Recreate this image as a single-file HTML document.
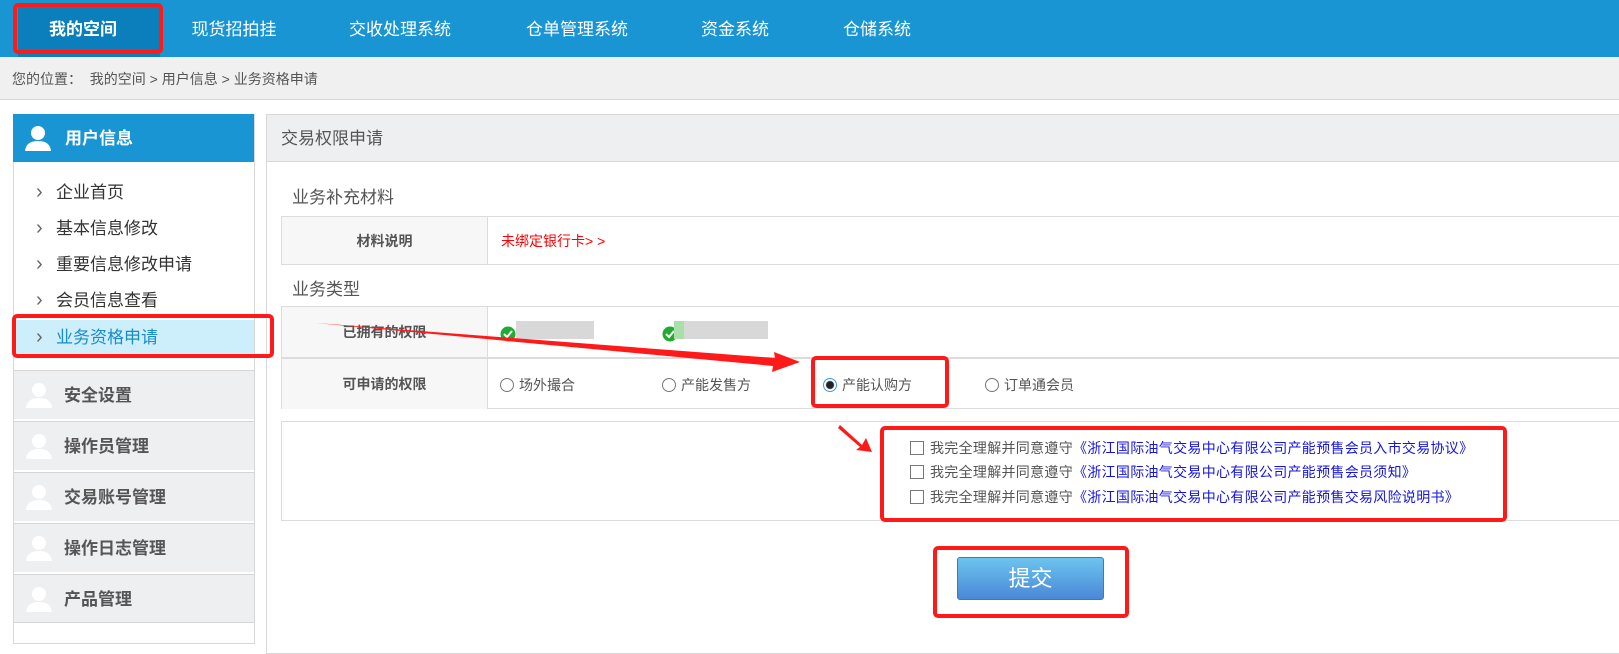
<!DOCTYPE html>
<html><head><meta charset="utf-8">
<style>
*{margin:0;padding:0;box-sizing:border-box}
body{width:1619px;height:644px;overflow:hidden;background:#fff;font-family:"Liberation Sans","Noto Sans CJK SC",sans-serif;position:relative;color:#333}
.a{position:absolute}
.nav{left:0;top:0;width:1619px;height:57px;background:#1a95d3}
.nav span{position:absolute;top:0;line-height:60px;color:#fff;font-size:17px;transform:translateX(-50%)}
.crumb{left:0;top:57px;width:1619px;height:43px;background:#f0f0f0;border-bottom:1px solid #d6d6d6;font-size:14px;color:#555;line-height:44px;padding-left:12px}
.side{left:13px;top:114px;width:242px;height:530px;border:1px solid #d8d8d8;border-top:none;background:#fff}
.sh{left:13px;top:114px;width:241px;height:48px;background:#1a95d3;color:#fff;font-weight:bold;font-size:17px;line-height:50px;padding-left:52px}
.li{left:14px;width:240px;height:36px;font-size:17px;line-height:36px;padding-left:42px;color:#333}
.li:before{content:"›";position:absolute;left:22px;top:-1px;color:#666;font-size:20px}
.sec{left:14px;width:240px;height:49px;background:#eeeff1;border-top:1px solid #d6d6d6;font-size:17px;font-weight:bold;color:#555;line-height:50px;padding-left:50px}
.user{position:absolute;left:10px;top:11px}
.main{left:266px;top:114px;width:1360px;height:540px;border:1px solid #d8d8d8}
.mh{left:267px;top:115px;width:1352px;height:47px;background:#eeeff1;border-bottom:1px solid #d8d8d8;font-size:17px;color:#555;line-height:48px;padding-left:14px}
.tt{font-size:17px;color:#555}
.row{left:281px;width:1340px;border:1px solid #dcdcdc;background:#fff}
.lab{position:absolute;left:0;top:0;width:206px;height:100%;background:#f7f7f7;border-right:1px solid #dcdcdc;text-align:center;font-weight:bold;font-size:14px;color:#555}
.rad{position:absolute;font-size:14px;color:#555}
.rad i{display:inline-block;width:14px;height:14px;border:1px solid #777;border-radius:50%;vertical-align:-2px;margin-right:5px;background:#fff}
.cb{position:absolute;left:910px;font-size:14px;color:#555;letter-spacing:0.3px}
.cb i{display:inline-block;width:14px;height:14px;border:1px solid #777;vertical-align:-2px;margin-right:6px}
.cb b{font-weight:normal;color:#1515e0}
.btn{left:957px;top:557px;width:147px;height:43px;border:1px solid #3a7bc0;border-radius:3px;background:linear-gradient(#6cc4ee,#4a88d8);color:#fff;font-size:22px;text-align:center;line-height:42px}
</style></head><body>
<div class="a nav">
 <div class="a" style="left:18px;top:6px;width:142px;height:51px;background:#0a7fbb"></div>
 <span style="left:83px;font-weight:bold">我的空间</span>
 <span style="left:234px">现货招拍挂</span>
 <span style="left:400px">交收处理系统</span>
 <span style="left:577px">仓单管理系统</span>
 <span style="left:735px">资金系统</span>
 <span style="left:877px">仓储系统</span>
</div>
<div class="a crumb">您的位置：&nbsp; 我的空间 &gt; 用户信息 &gt; 业务资格申请</div>

<div class="a side"></div>
<div class="a sh"><svg class="user" width="30" height="26" viewBox="0 0 30 26"><circle cx="15" cy="8" r="7" fill="#fff"/><path d="M2 26 Q3 16 15 16 Q27 16 28 26Z" fill="#fff"/></svg>用户信息</div>
<div class="a li" style="top:175px">企业首页</div>
<div class="a li" style="top:211px">基本信息修改</div>
<div class="a li" style="top:247px">重要信息修改申请</div>
<div class="a li" style="top:283px">会员信息查看</div>
<div class="a li" style="top:320px;background:#cdeefb;color:#1a8cc8">业务资格申请</div>
<div class="a sec" style="top:370px"><svg class="user" width="30" height="26" viewBox="0 0 30 26"><circle cx="15" cy="8" r="7" fill="#fff"/><path d="M2 26 Q3 16 15 16 Q27 16 28 26Z" fill="#fff"/></svg>安全设置</div>
<div class="a sec" style="top:421px"><svg class="user" width="30" height="26" viewBox="0 0 30 26"><circle cx="15" cy="8" r="7" fill="#fff"/><path d="M2 26 Q3 16 15 16 Q27 16 28 26Z" fill="#fff"/></svg>操作员管理</div>
<div class="a sec" style="top:472px"><svg class="user" width="30" height="26" viewBox="0 0 30 26"><circle cx="15" cy="8" r="7" fill="#fff"/><path d="M2 26 Q3 16 15 16 Q27 16 28 26Z" fill="#fff"/></svg>交易账号管理</div>
<div class="a sec" style="top:523px"><svg class="user" width="30" height="26" viewBox="0 0 30 26"><circle cx="15" cy="8" r="7" fill="#fff"/><path d="M2 26 Q3 16 15 16 Q27 16 28 26Z" fill="#fff"/></svg>操作日志管理</div>
<div class="a sec" style="top:574px;border-bottom:1px solid #d6d6d6"><svg class="user" width="30" height="26" viewBox="0 0 30 26"><circle cx="15" cy="8" r="7" fill="#fff"/><path d="M2 26 Q3 16 15 16 Q27 16 28 26Z" fill="#fff"/></svg>产品管理</div>

<div class="a main"></div>
<div class="a mh">交易权限申请</div>
<div class="a tt" style="left:292px;top:183px">业务补充材料</div>
<div class="a row" style="top:216px;height:49px"><div class="lab" style="line-height:48px">材料说明</div><div class="a" style="left:219px;top:0;line-height:48px;font-size:14px;color:#f00">未绑定银行卡&gt; &gt;</div></div>
<div class="a tt" style="left:292px;top:275px">业务类型</div>
<div class="a row" style="top:306px;height:103px"><div class="lab" style="height:50px;line-height:50px">已拥有的权限</div>
<div class="a" style="left:0;top:50px;width:1340px;border-top:2px solid #dcdcdc"></div>
<div class="lab" style="top:52px;height:50px;line-height:50px">可申请的权限</div>
<svg class="a" style="left:218px;top:19px" width="16" height="16"><circle cx="8" cy="8" r="7.5" fill="#22aa33"/><path d="M4 8 L7 11 L12 5" stroke="#fff" stroke-width="2" fill="none"/></svg>
<div class="a" style="left:234px;top:14px;width:78px;height:18px;background:#d8d8d8"></div>
<svg class="a" style="left:380px;top:19px" width="16" height="16"><circle cx="8" cy="8" r="7.5" fill="#22aa33"/><path d="M4 8 L7 11 L12 5" stroke="#fff" stroke-width="2" fill="none"/></svg>
<div class="a" style="left:392px;top:14px;width:10px;height:18px;background:#a8e0a8"></div>
<div class="a" style="left:402px;top:14px;width:84px;height:18px;background:#d8d8d8"></div>
<div class="rad" style="left:218px;top:68px"><i></i>场外撮合</div>
<div class="rad" style="left:380px;top:68px"><i></i>产能发售方</div>
<div class="rad" style="left:541px;top:68px"><i style="border-color:#3a9ad9;background:radial-gradient(circle,#222 3.5px,#fff 4.5px)"></i>产能认购方</div>
<div class="rad" style="left:703px;top:68px"><i></i>订单通会员</div>
</div>
<div class="a row" style="top:421px;height:100px"></div>
<div class="cb" style="top:438px"><i></i>我完全理解并同意遵守<b>《浙江国际油气交易中心有限公司产能预售会员入市交易协议》</b></div>
<div class="cb" style="top:462px"><i></i>我完全理解并同意遵守<b>《浙江国际油气交易中心有限公司产能预售会员须知》</b></div>
<div class="cb" style="top:487px"><i></i>我完全理解并同意遵守<b>《浙江国际油气交易中心有限公司产能预售交易风险说明书》</b></div>
<div class="a btn">提交</div>

<svg class="a" style="left:0;top:0" width="1619" height="644">
<g fill="none" stroke="#ff1a1a" stroke-width="4">
<rect x="15" y="5" width="146" height="47" rx="3"/>
<rect x="14" y="316" width="258" height="40" rx="3"/>
<rect x="813" y="358" width="134" height="48" rx="3"/>
<rect x="882" y="428" width="623" height="92" rx="3"/>
<rect x="935" y="548" width="192" height="68" rx="3"/>
</g>
<path d="M316 323 L775 358 L774 352 L800 362 L772 372 L773 366 Z" fill="#ff1a1a"/>
<path d="M840 425 L862 445 L866 438 L872 452 L856 450 L860 447 L838 428 Z" fill="#ff1a1a"/>
</svg>
</body></html>
